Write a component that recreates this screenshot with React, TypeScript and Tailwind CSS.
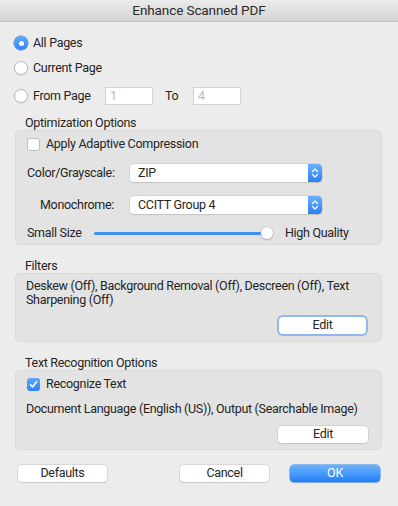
import React from 'react';

const font = { fontFamily: 'Roboto, "Liberation Sans", sans-serif' };

function Radio({ checked, label }: { checked?: boolean; label: string }) {
    return (
        <div className="flex items-center gap-[5px] h-[14px]">
            {checked ? (
                <span className="w-[14px] h-[14px] rounded-full bg-gradient-to-b from-[#63a9f8] to-[#2f84f3] flex items-center justify-center shadow-[0_0_0_0.5px_#2a78e0]">
                    <span className="w-[5px] h-[5px] rounded-full bg-white" />
                </span>
            ) : (
                <span className="w-[14px] h-[14px] rounded-full bg-white border border-[#b8b8b8] shadow-[0_0.5px_1px_rgba(0,0,0,0.1)]" />
            )}
            <span className="leading-none">{label}</span>
        </div>
    );
}

function Checkbox({ checked, label }: { checked?: boolean; label: string }) {
    return (
        <div className="flex items-center gap-[6px] h-[14px]">
            {checked ? (
                <span className="w-[13px] h-[13px] rounded-[3px] bg-gradient-to-b from-[#5fa6f8] to-[#2f84f3] flex items-center justify-center">
                    <svg width="9" height="9" viewBox="0 0 9 9">
                        <path d="M1.5 4.8 L3.6 7 L7.5 1.8" fill="none" stroke="white" strokeWidth="1.6" strokeLinecap="round" strokeLinejoin="round" />
                    </svg>
                </span>
            ) : (
                <span className="w-[13px] h-[13px] rounded-[3px] bg-white border border-[#bdbdbd]" />
            )}
            <span className="leading-none">{label}</span>
        </div>
    );
}

function Popup({ value }: { value: string }) {
    return (
        <div className="w-[192px] h-[18px] rounded-[4px] bg-white shadow-[0_0_0_0.5px_#c2c2c2,0_1px_1px_rgba(0,0,0,0.12)] flex items-center overflow-hidden">
            <span className="flex-1 pl-[8px] leading-none">{value}</span>
            <span className="w-[14px] h-full bg-gradient-to-b from-[#6aaefa] to-[#2c82f3] flex items-center justify-center">
                <svg width="8" height="12" viewBox="0 0 8 12">
                    <path d="M1.5 4.5 L4 2 L6.5 4.5 M1.5 7.5 L4 10 L6.5 7.5" fill="none" stroke="white" strokeWidth="1.2" strokeLinecap="round" strokeLinejoin="round" />
                </svg>
            </span>
        </div>
    );
}

function Button({ children, className = '' }: { children: React.ReactNode; className?: string }) {
    return (
        <div className={`h-[17px] rounded-[4px] bg-white shadow-[0_0_0_0.5px_#c4c4c4,0_1px_1px_rgba(0,0,0,0.12)] flex items-center justify-center leading-none ${className}`}>
            {children}
        </div>
    );
}

export default function App() {
    return (
        <div style={font} className="w-[398px] h-[506px] bg-[#ececec] text-[12.5px] tracking-[-0.3px] text-[#252525] overflow-hidden whitespace-nowrap">
            {/* title bar */}
            <div className="h-[22px] bg-gradient-to-b from-[#ebebeb] to-[#d4d4d4] border-b border-[#c3c3c3] flex items-center justify-center text-[13.5px] tracking-[-0.1px] text-[#2a2a2a]">
                Enhance Scanned PDF
            </div>

            <div className="pl-[15px] pr-[16px] pt-[14px]">
                <div className="-ml-px">
                    <Radio checked label="All Pages" />
                    <div className="mt-[11px]">
                        <Radio label="Current Page" />
                    </div>
                    <div className="mt-[12px] flex items-center h-[18px]">
                        <div className="w-[91px]">
                            <Radio label="From Page" />
                        </div>
                        <div className="w-[48px] h-[18px] bg-white border border-[#d3d3d3] flex items-center pl-[4px] text-[#b8b8b8] leading-none">1</div>
                        <span className="ml-[12px] w-[28px] leading-none">To</span>
                        <div className="w-[48px] h-[18px] bg-white border border-[#d3d3d3] flex items-center pl-[4px] text-[#b8b8b8] leading-none">4</div>
                    </div>
                </div>

                {/* Optimization */}
                <div className="mt-[10px] h-[15px] leading-[15px] pl-[10px]">Optimization Options</div>
                <div className="h-[115px] rounded-[5px] bg-[#e3e3e3] border border-[#dadada] px-[11px] pt-[6px]">
                    <Checkbox label="Apply Adaptive Compression" />
                    <div className="mt-[13px] flex items-center gap-[16px]">
                        <span className="w-[87px] text-right leading-none">Color/Grayscale:</span>
                        <Popup value="ZIP" />
                    </div>
                    <div className="mt-[14px] flex items-center gap-[16px]">
                        <span className="w-[87px] text-right leading-none">Monochrome:</span>
                        <Popup value="CCITT Group 4" />
                    </div>
                    <div className="mt-[12px] flex items-center h-[14px]">
                        <span className="w-[67px] leading-none">Small Size</span>
                        <div className="relative w-[179px] h-[12px] flex items-center">
                            <div className="w-[173px] h-[3px] rounded-full bg-[#3f8ff0]" />
                            <div className="absolute right-0 top-0 w-[12px] h-[12px] rounded-full bg-white shadow-[0_0_0_0.5px_#b5b5b5,0_1px_1.5px_rgba(0,0,0,0.25)]" />
                        </div>
                        <span className="ml-[12px] leading-none">High Quality</span>
                    </div>
                </div>

                {/* Filters */}
                <div className="mt-[13px] h-[15px] leading-[15px] pl-[10px]">Filters</div>
                <div className="h-[69px] rounded-[5px] bg-[#e3e3e3] border border-[#dadada] pl-[10px] pr-[15px] pt-[5px]">
                    <div className="leading-[14px]">
                        Deskew (Off), Background Removal (Off), Descreen (Off), Text
                        <br />
                        Sharpening (Off)
                    </div>
                    <div className="mt-[10px] flex justify-end">
                        <Button className="w-[87px] ring-2 ring-[#8fb8ef]">Edit</Button>
                    </div>
                </div>

                {/* Text Recognition */}
                <div className="mt-[13px] h-[15px] leading-[15px] pl-[10px]">Text Recognition Options</div>
                <div className="h-[80px] rounded-[5px] bg-[#e3e3e3] border border-[#dadada] pl-[11px] pr-[13px] pt-[6px]">
                    <Checkbox checked label="Recognize Text" />
                    <div className="mt-[11px] h-[14px] leading-[14px] -ml-px">Document Language (English (US)), Output (Searchable Image)</div>
                    <div className="mt-[10px] flex justify-end">
                        <Button className="w-[90px]">Edit</Button>
                    </div>
                </div>

                {/* bottom buttons */}
                <div className="mt-[15px] flex items-center">
                    <Button className="ml-[3px] w-[89px]">Defaults</Button>
                    <Button className="ml-[73px] w-[89px]">Cancel</Button>
                    <div className="ml-[21px] w-[90px] h-[17px] rounded-[4px] bg-gradient-to-b from-[#6cb2fb] to-[#1b7ff7] shadow-[0_0_0_0.5px_#3a85e6,0_1px_1px_rgba(0,0,0,0.12)] flex items-center justify-center text-white leading-none">
                        OK
                    </div>
                </div>
            </div>
        </div>
    );
}
